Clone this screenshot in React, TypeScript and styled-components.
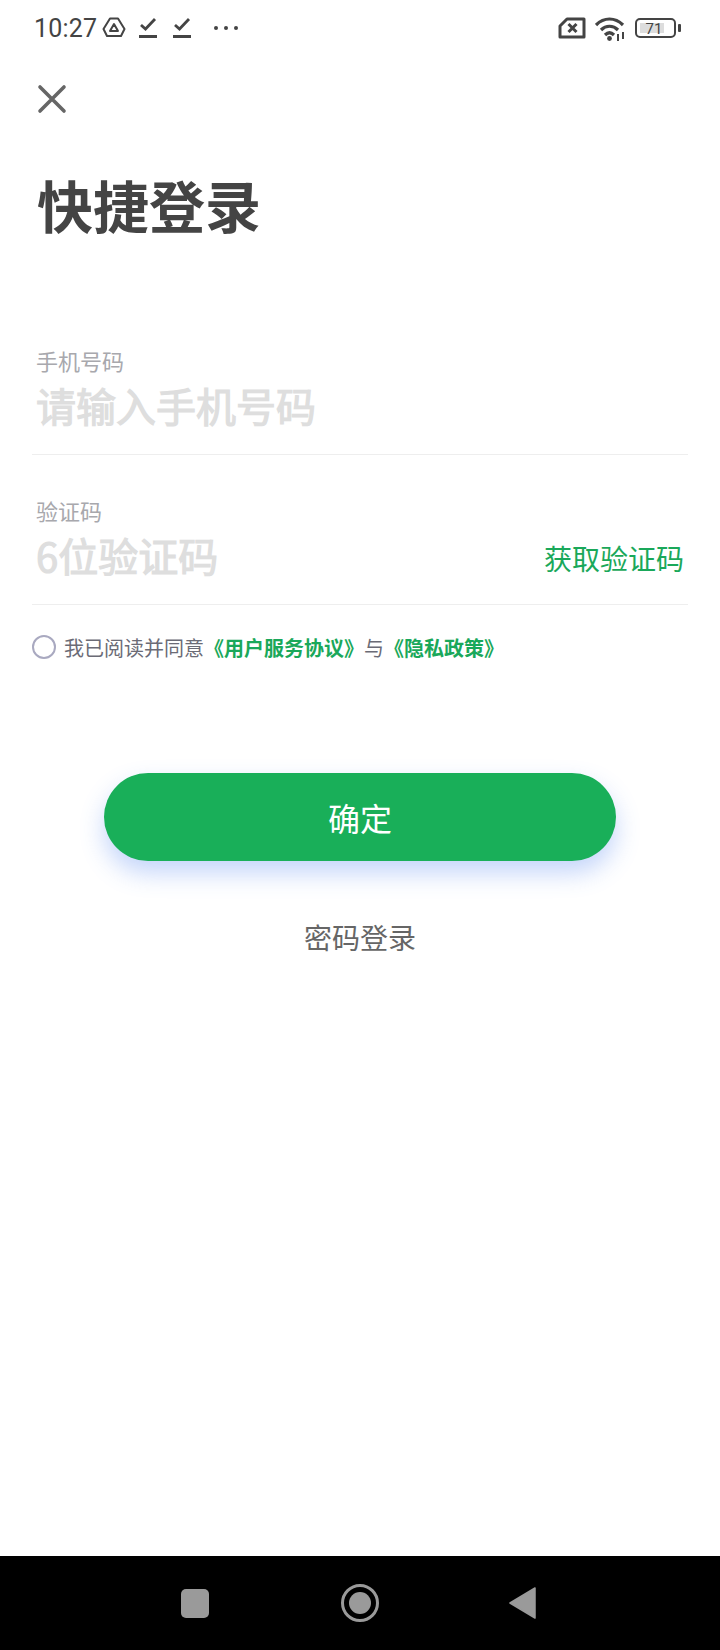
import React from 'react';
import styled, { createGlobalStyle } from 'styled-components';

const GlobalStyle = createGlobalStyle`
  html, body {
    margin: 0;
    padding: 0;
    background: #fff;
  }
  * {
    box-sizing: border-box;
  }
`;

const cjk = `"Noto Sans CJK SC", "Noto Sans", sans-serif`;

const Page = styled.div`
  width: 720px;
  height: 1650px;
  display: flex;
  flex-direction: column;
  background: #fff;
  font-family: ${cjk};
  overflow: hidden;
`;

const StatusBar = styled.div`
  height: 56px;
  display: flex;
  align-items: center;
  justify-content: space-between;
  padding: 0 39px 0 34px;
  flex-shrink: 0;
`;

const StatusGroup = styled.div`
  display: flex;
  align-items: center;
`;

const Clock = styled.span`
  font-family: Roboto, sans-serif;
  font-size: 25px;
  color: #444;
  letter-spacing: 0.2px;
  margin-right: 5px;
`;

const Main = styled.div`
  flex: 1;
  display: flex;
  flex-direction: column;
  padding: 0 32px;
`;

const CloseButton = styled.button`
  width: 32px;
  height: 32px;
  margin: 27px 0 0 4px;
  padding: 0;
  border: 0;
  background: none;
  display: block;
`;

const Title = styled.h1`
  margin: 49px 0 0 5px;
  font-size: 56px;
  line-height: 80px;
  font-weight: 700;
  color: #444;
`;

const Field = styled.div<{ $top: number }>`
  margin-top: ${(p) => p.$top}px;
  height: 110px;
  border-bottom: 1px solid #eee;
  padding-left: 4px;
`;

const FieldLabel = styled.div`
  font-size: 22px;
  line-height: 30px;
  color: #a8a8ad;
`;

const FieldRow = styled.div`
  display: flex;
  align-items: center;
  justify-content: space-between;
  height: 60px;
`;

const Placeholder = styled.span`
  font-size: 40px;
  font-weight: 400;
  color: #dedede;
  -webkit-text-stroke: 1.2px #dedede;
`;

const CodeLink = styled.span`
  font-size: 28px;
  color: #1aa85a;
  margin: 6px 4px 0 0;
`;

const Terms = styled.div`
  display: flex;
  align-items: center;
  height: 30px;
  margin-top: 27px;
  font-size: 20px;
  color: #6b6b76;
`;

const Radio = styled.span`
  width: 24px;
  height: 24px;
  border: 2px solid #a9a9c0;
  border-radius: 50%;
  margin-right: 8px;
  flex-shrink: 0;
`;

const TermsLink = styled.span`
  color: #1aa85a;
  font-weight: 700;
`;

const SubmitButton = styled.button`
  width: 512px;
  height: 88px;
  margin: 111px auto 0;
  display: block;
  border: 0;
  border-radius: 44px;
  background: #19af59;
  color: #fff;
  font-family: ${cjk};
  font-size: 32px;
  box-shadow: 0 12px 24px rgba(70, 125, 240, 0.32);
`;

const PasswordLogin = styled.div`
  margin-top: 55px;
  text-align: center;
  font-size: 28px;
  line-height: 42px;
  color: #666;
`;

const NavBar = styled.div`
  height: 94px;
  background: #000;
  display: flex;
  align-items: center;
  flex-shrink: 0;
  padding-left: 181px;
`;

const NavSquare = styled.span`
  width: 28px;
  height: 29px;
  border-radius: 5px;
  background: #9a9a9a;
`;

const NavHome = styled.span`
  width: 38px;
  height: 38px;
  margin-left: 132px;
  border: 3px solid #9a9a9a;
  border-radius: 50%;
  display: flex;
  align-items: center;
  justify-content: center;
  &::after {
    content: '';
    width: 22px;
    height: 22px;
    border-radius: 50%;
    background: #9a9a9a;
  }
`;

const NavBack = styled.svg`
  margin-left: 130px;
`;

const DriveIcon = () => (
  <svg width="24" height="24" viewBox="0 0 24 24" fill="none" stroke="#444" strokeWidth="2" strokeLinejoin="round" style={{ marginRight: 13 }}>
    <path d="M8 2.500h8l6.500 10.500-3.500 7H5l-3.500-7z" />
    <path d="M12 8l4 7H8z" />
  </svg>
);

const CheckIcon = ({ gap }: { gap: number }) => (
  <svg width="18" height="22" viewBox="0 0 18 22" fill="none" stroke="#444" style={{ marginRight: gap }}>
    <path d="M2 8l4.500 4L16 2" strokeWidth="2.800" />
    <path d="M0 19.500h18" strokeWidth="3" />
  </svg>
);

const DotsIcon = () => (
  <svg width="26" height="6" viewBox="0 0 26 6" fill="#444">
    <circle cx="3" cy="3" r="2" />
    <circle cx="13" cy="3" r="2" />
    <circle cx="23" cy="3" r="2" />
  </svg>
);

const SimIcon = () => (
  <svg width="28" height="22" viewBox="0 0 28 22" fill="none" stroke="#444" strokeWidth="3" strokeLinejoin="round" style={{ marginRight: 9 }}>
    <path d="M9 2h17v18H2V9z" />
    <path d="M10.500 7l8 8M18.500 7l-8 8" />
  </svg>
);

const WifiIcon = () => (
  <svg width="31" height="25" viewBox="0 0 31 25" fill="none" stroke="#444" strokeWidth="3.200" style={{ marginRight: 9 }}>
    <path d="M1 9C9 1 20 1 28 9" />
    <path d="M6 14c5-5 12-5 17 0" />
    <path d="M10 19c3-3 6-3 9 0" />
    <circle cx="14.500" cy="22.500" r="2.400" fill="#444" stroke="none" />
    <path d="M23 18v7M28 16v7" strokeWidth="2" />
  </svg>
);

const BatteryIcon = () => (
  <svg width="46" height="20" viewBox="0 0 46 20" fill="none">
    <rect x="1" y="1" width="39" height="18" rx="4" stroke="#444" strokeWidth="2" />
    <rect x="5" y="5" width="24" height="10" fill="#ddd" />
    <text x="19" y="15.500" textAnchor="middle" fontFamily="Roboto, sans-serif" fontSize="15" fill="#444">
      71
    </text>
    <rect x="43" y="6" width="3" height="8" rx="1" fill="#444" />
  </svg>
);

const CloseIcon = () => (
  <svg width="32" height="32" viewBox="0 0 32 32" fill="none" stroke="#666" strokeWidth="3.600" strokeLinecap="round">
    <path d="M4 4l24 24M28 4L4 28" />
  </svg>
);

const App = () => {
  return (
    <Page>
      <GlobalStyle />
      <StatusBar>
        <StatusGroup>
          <Clock>10:27</Clock>
          <DriveIcon />
          <CheckIcon gap={16} />
          <CheckIcon gap={22} />
          <DotsIcon />
        </StatusGroup>
        <StatusGroup>
          <SimIcon />
          <WifiIcon />
          <BatteryIcon />
        </StatusGroup>
      </StatusBar>

      <Main>
        <CloseButton>
          <CloseIcon />
        </CloseButton>
        <Title>快捷登录</Title>

        <Field $top={101}>
          <FieldLabel>手机号码</FieldLabel>
          <FieldRow>
            <Placeholder>请输入手机号码</Placeholder>
          </FieldRow>
        </Field>
        <Field $top={40}>
          <FieldLabel>验证码</FieldLabel>
          <FieldRow>
            <Placeholder>6位验证码</Placeholder>
            <CodeLink>获取验证码</CodeLink>
          </FieldRow>
        </Field>

        <Terms>
          <Radio />
          我已阅读并同意
          <TermsLink>《用户服务协议》</TermsLink>与<TermsLink>《隐私政策》</TermsLink>
        </Terms>

        <SubmitButton>确定</SubmitButton>
        <PasswordLogin>密码登录</PasswordLogin>
      </Main>

      <NavBar>
        <NavSquare />
        <NavHome />
        <NavBack width="28" height="34" viewBox="0 0 28 34">
          <path d="M26 2L1 17l25 15z" fill="#9a9a9a" stroke="#9a9a9a" strokeWidth="1.500" strokeLinejoin="round" />
        </NavBack>
      </NavBar>
    </Page>
  );
};

export default App;
